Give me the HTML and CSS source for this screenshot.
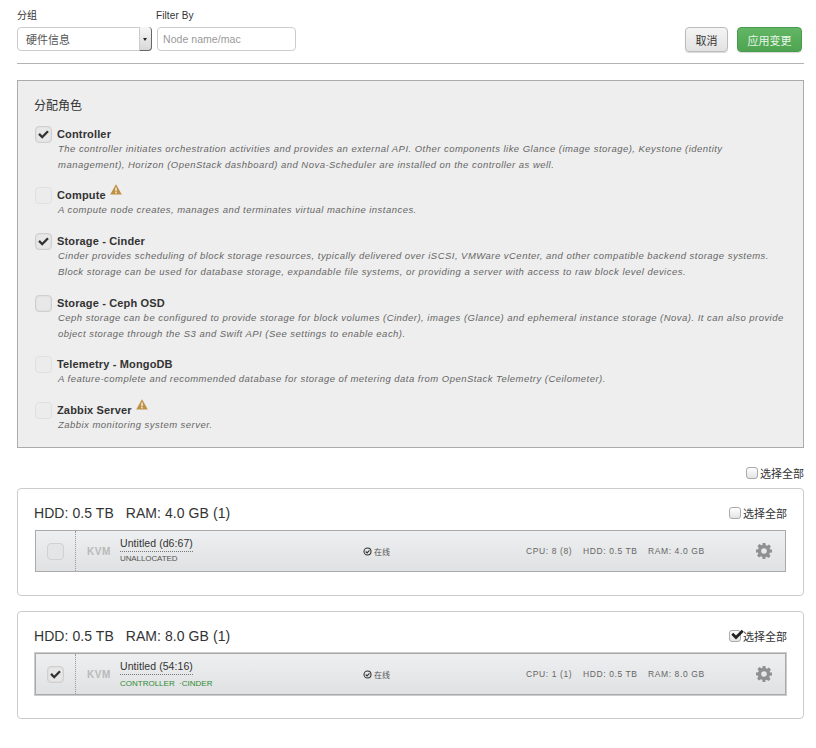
FILE: index.html
```html
<!DOCTYPE html>
<html lang="zh">
<head>
<meta charset="utf-8">
<title>分配角色</title>
<link rel="stylesheet" href="styles.css">
</head>
<body>
<svg class="defs" width="0" height="0" aria-hidden="true">
  <defs>
    <symbol id="gear" viewBox="0 0 16 16"><path fill-rule="evenodd" d="M6.6 0h2.8l.4 2.2 1.3.55 1.85-1.3 2 2-1.3 1.85.55 1.3L16 6.6v2.8l-2.2.4-.55 1.3 1.3 1.85-2 2-1.85-1.3-1.3.55L9.4 16H6.6l-.4-2.2-1.3-.55-1.85 1.3-2-2 1.3-1.85-.55-1.3L0 9.4V6.6l2.2-.4.55-1.3-1.3-1.85 2-2 1.85 1.3 1.3-.55zM8 5.2a2.8 2.8 0 1 0 0 5.6 2.8 2.8 0 0 0 0-5.6z"/></symbol>
    <symbol id="warn" viewBox="0 0 12 11"><path d="M6 0.3 11.8 10.6H0.2z"/><rect class="warn-mark" x="5.3" y="3.6" width="1.4" height="3.8"/><rect class="warn-mark" x="5.3" y="8" width="1.4" height="1.4"/></symbol>
    <symbol id="tick" viewBox="0 0 14 12"><path d="M1.2 6.2 3 4.4l2.6 2.6L11 1.6l1.8 1.8-7.2 7.2z"/></symbol>
    <symbol id="status" viewBox="0 0 9 9"><circle cx="4.5" cy="4.5" r="3.5" fill="none" stroke="#333" stroke-width="1.1"/><path d="M2.7 4.5 4.1 5.9 6.4 3.3" fill="none" stroke="#333" stroke-width="1.1"/></symbol>
  </defs>
</svg>

<header class="toolbar">
  <div class="field">
    <label class="field-label">分组</label>
    <div class="select"><span class="select-value">硬件信息</span><span class="select-arrow"></span></div>
  </div>
  <div class="field">
    <label class="field-label field-label-filter">Filter By</label>
    <div class="text-input">Node name/mac</div>
  </div>
  <div class="actions">
    <button class="btn">取消</button>
    <button class="btn btn-apply">应用变更</button>
  </div>
</header>

<section class="roles">
  <h3 class="roles-title">分配角色</h3>

  <div class="role role-first role-tight">
    <span class="check checked"><svg class="tick"><use href="#tick"/></svg></span>
    <div class="role-name">Controller</div>
    <p class="role-desc">The controller initiates orchestration activities and provides an external API. Other components like Glance (image storage), Keystone (identity<br>management), Horizon (OpenStack dashboard) and Nova-Scheduler are installed on the controller as well.</p>
  </div>
  <div class="role">
    <span class="check disabled"></span>
    <div class="role-name">Compute <svg class="warn"><use href="#warn"/></svg></div>
    <p class="role-desc">A compute node creates, manages and terminates virtual machine instances.</p>
  </div>
  <div class="role">
    <span class="check checked"><svg class="tick"><use href="#tick"/></svg></span>
    <div class="role-name">Storage - Cinder</div>
    <p class="role-desc">Cinder provides scheduling of block storage resources, typically delivered over iSCSI, VMWare vCenter, and other compatible backend storage systems.<br>Block storage can be used for database storage, expandable file systems, or providing a server with access to raw block level devices.</p>
  </div>
  <div class="role role-tight">
    <span class="check"></span>
    <div class="role-name">Storage - Ceph OSD</div>
    <p class="role-desc">Ceph storage can be configured to provide storage for block volumes (Cinder), images (Glance) and ephemeral instance storage (Nova). It can also provide<br>object storage through the S3 and Swift API (See settings to enable each).</p>
  </div>
  <div class="role">
    <span class="check disabled"></span>
    <div class="role-name">Telemetry - MongoDB</div>
    <p class="role-desc">A feature-complete and recommended database for storage of metering data from OpenStack Telemetry (Ceilometer).</p>
  </div>
  <div class="role">
    <span class="check disabled"></span>
    <div class="role-name">Zabbix Server <svg class="warn"><use href="#warn"/></svg></div>
    <p class="role-desc">Zabbix monitoring system server.</p>
  </div>
</section>

<div class="select-all select-all-page"><span class="mini-check"></span>选择全部</div>

<section class="group">
  <div class="group-head">
    <h4 class="group-title">HDD: 0.5 TB &nbsp; RAM: 4.0 GB (1)</h4>
    <div class="select-all"><span class="mini-check"></span>选择全部</div>
  </div>
  <div class="node">
    <div class="node-check"><span class="check disabled"></span></div>
    <div class="node-kvm">KVM</div>
    <div class="node-name">
      <div class="node-title"><span>Untitled (d6:67)</span></div>
      <div class="node-role">UNALLOCATED</div>
    </div>
    <div class="node-status"><svg class="status"><use href="#status"/></svg>在线</div>
    <div class="node-specs"><span class="spec-cpu">CPU: 8 (8)</span><span class="spec-hdd">HDD: 0.5 TB</span><span class="spec-ram">RAM: 4.0 GB</span></div>
    <svg class="gear"><use href="#gear"/></svg>
  </div>
</section>

<section class="group">
  <div class="group-head">
    <h4 class="group-title">HDD: 0.5 TB &nbsp; RAM: 8.0 GB (1)</h4>
    <div class="select-all"><span class="mini-check mini-checked"><svg class="mini-tick"><use href="#tick"/></svg></span>选择全部</div>
  </div>
  <div class="node node-selected">
    <div class="node-check"><span class="check checked"><svg class="tick"><use href="#tick"/></svg></span></div>
    <div class="node-kvm">KVM</div>
    <div class="node-name">
      <div class="node-title"><span>Untitled (54:16)</span></div>
      <div class="node-role node-role-on">CONTROLLER &nbsp;·CINDER</div>
    </div>
    <div class="node-status"><svg class="status"><use href="#status"/></svg>在线</div>
    <div class="node-specs"><span class="spec-cpu">CPU: 1 (1)</span><span class="spec-hdd">HDD: 0.5 TB</span><span class="spec-ram">RAM: 8.0 GB</span></div>
    <svg class="gear"><use href="#gear"/></svg>
  </div>
</section>
</body>
</html>
```
FILE: styles.css
```css
* { box-sizing: border-box; }
html, body { margin: 0; padding: 0; }
body {
  padding: 0 12px 0 17px;
  background: #fff;
  color: #333;
  font-family: "Liberation Sans", "Noto Sans CJK SC", sans-serif;
  font-size: 11px;
}
.defs { position: absolute; }

.toolbar {
  display: flex;
  align-items: flex-start;
  gap: 5px;
  height: 64px;
  padding-top: 9px;
  border-bottom: 1px solid #b4b4b4;
}
.field-label { display: block; height: 18px; line-height: 13px; font-size: 10px; color: #333; }
.field-label-filter { margin-left: -1px; letter-spacing: .1px; }
.select {
  display: flex;
  width: 135px;
  height: 24px;
  border: 1px solid #ccc;
  border-radius: 4px;
  background: #fff;
}
.select-value { flex: 1; padding-left: 8px; line-height: 24px; font-size: 11px; color: #555; }
.select-arrow {
  position: relative;
  width: 13px;
  margin: -1px -1px -1px 0;
  background: linear-gradient(#f6f6f6, #d8d8d8);
  border-left: 1px solid #ccc;
  border-right: 1px solid #666;
  border-bottom: 1px solid #666;
  border-radius: 0 4px 4px 0;
}
.select-arrow::after {
  content: "";
  position: absolute;
  left: 3px;
  top: 11px;
  border: 2px solid transparent;
  border-top: 3px solid #222;
  border-bottom: 0;
}
.text-input {
  width: 139px;
  height: 24px;
  padding-left: 5px;
  border: 1px solid #ccc;
  border-radius: 4px;
  line-height: 22px;
  font-size: 10.5px;
  letter-spacing: .05px;
  color: #999;
}
.actions { display: flex; gap: 9px; margin-left: auto; margin-right: 2px; padding-top: 18px; }
.btn {
  width: 43px;
  height: 25px;
  padding: 0;
  border: 1px solid #bbb;
  border-radius: 4px;
  background: linear-gradient(#f4f4f4, #e2e2e2);
  box-shadow: 0 1px 1px rgba(0,0,0,.15);
  font: 11px "Liberation Sans", "Noto Sans CJK SC", sans-serif;
  color: #333;
}
.btn-apply {
  width: 65px;
  border-color: #4a9a4d;
  background: linear-gradient(#62b665, #4ea451);
  color: #e8f5e8;
}

.roles {
  height: 368px;
  margin-top: 16px;
  padding: 18px 16px 0;
  border: 1px solid #ababab;
  background: #eee;
}
.roles-title { margin: 0; height: 28px; font-weight: normal; font-size: 12px; line-height: 15px; color: #333; }
.role { position: relative; margin-top: 16px; padding-left: 23px; }
.role-first { margin-top: 0; }
.role-tight { margin-bottom: -1px; }
.role-name { position: relative; height: 14px; line-height: 15px; font-size: 11px; font-weight: bold; letter-spacing: .15px; color: #333; }
.role-desc {
  margin: 0;
  padding-left: 1px;
  line-height: 16px;
  font-size: 9.5px;
  font-style: italic;
  letter-spacing: .47px;
  color: #666;
  white-space: nowrap;
}
.warn { position: absolute; top: -4px; width: 12px; height: 11px; fill: #c08f41; margin-left: 4px; }
.warn-mark { fill: #f3f3f3; }
.check {
  display: flex;
  align-items: center;
  justify-content: center;
  width: 17px;
  height: 17px;
  border: 1px solid #cfcfcf;
  border-radius: 4px;
  background: #e8e8e8;
  box-shadow: inset 0 0 2px rgba(0,0,0,.1);
}
.role > .check { position: absolute; left: 1px; top: -1px; }
.check.disabled { background: #ececec; border-color: #e0e0e0; box-shadow: none; }
.tick { width: 13px; height: 11px; fill: #333; }

.select-all {
  display: flex;
  align-items: center;
  justify-content: flex-end;
  height: 14px;
  font-size: 11px;
  color: #333;
}
.select-all-page { margin: 18px 0 0; height: 14px; }
.mini-check {
  position: relative;
  width: 12px;
  height: 12px;
  margin-right: 2px;
  border: 1px solid #aaa;
  border-radius: 3px;
  background: linear-gradient(#fff, #e4e4e4);
}
.mini-tick { position: absolute; left: 0; top: -3px; width: 15px; height: 13px; fill: #222; }

.group {
  height: 108px;
  margin-top: 8px;
  padding: 0 16px;
  border: 1px solid #ccc;
  border-radius: 4px;
}
.group + .group { margin-top: 15px; }
.group-head { display: flex; align-items: center; justify-content: space-between; height: 41px; padding-top: 7px; }
.group-title { margin: 0; font-weight: normal; font-size: 14px; letter-spacing: .07px; color: #333; }

.node {
  display: flex;
  align-items: center;
  height: 42px;
  margin: 0 1px;
  padding-right: 13px;
  border: 1px solid #aaa;
  background: linear-gradient(#eeeff0, #dfe1e2);
}
.node-selected { outline: 1px solid #ccc; }
.node-check {
  display: flex;
  align-items: center;
  justify-content: center;
  width: 40px;
  height: 100%;
  border-right: 1px dotted #999;
}
.node-check .check { background: #e6e6e6; }
.node-check .check.disabled { background: #e4e5e6; border-color: #cfd1d2; }
.node-kvm { width: 34px; padding-left: 11px; font-size: 10px; font-weight: bold; letter-spacing: .5px; color: #b9b9b9; }
.node-name { width: 253px; padding-left: 10px; }
.node-title { height: 15px; line-height: 13px; font-size: 10.5px; letter-spacing: .07px; color: #333; }
.node-title span { display: inline-block; height: 15px; border-bottom: 1px dotted #777; }
.node-role { height: 12px; line-height: 12px; margin-top: 1px; font-size: 8px; letter-spacing: -.1px; color: #555; }
.node-role-on { margin-top: 3px; margin-bottom: -2px; letter-spacing: 0; color: #2e8b33; }
.node-status { display: flex; align-items: center; width: 163px; font-size: 8px; color: #555; }
.status { width: 9px; height: 9px; margin-right: 2px; }
.node-specs { display: flex; font-size: 8.5px; letter-spacing: .6px; color: #666; white-space: nowrap; }
.spec-cpu { width: 57px; }
.spec-hdd { width: 65px; }
.spec-ram { width: 71px; }
.gear { width: 16px; height: 16px; fill: #909090; margin-left: auto; }
```
